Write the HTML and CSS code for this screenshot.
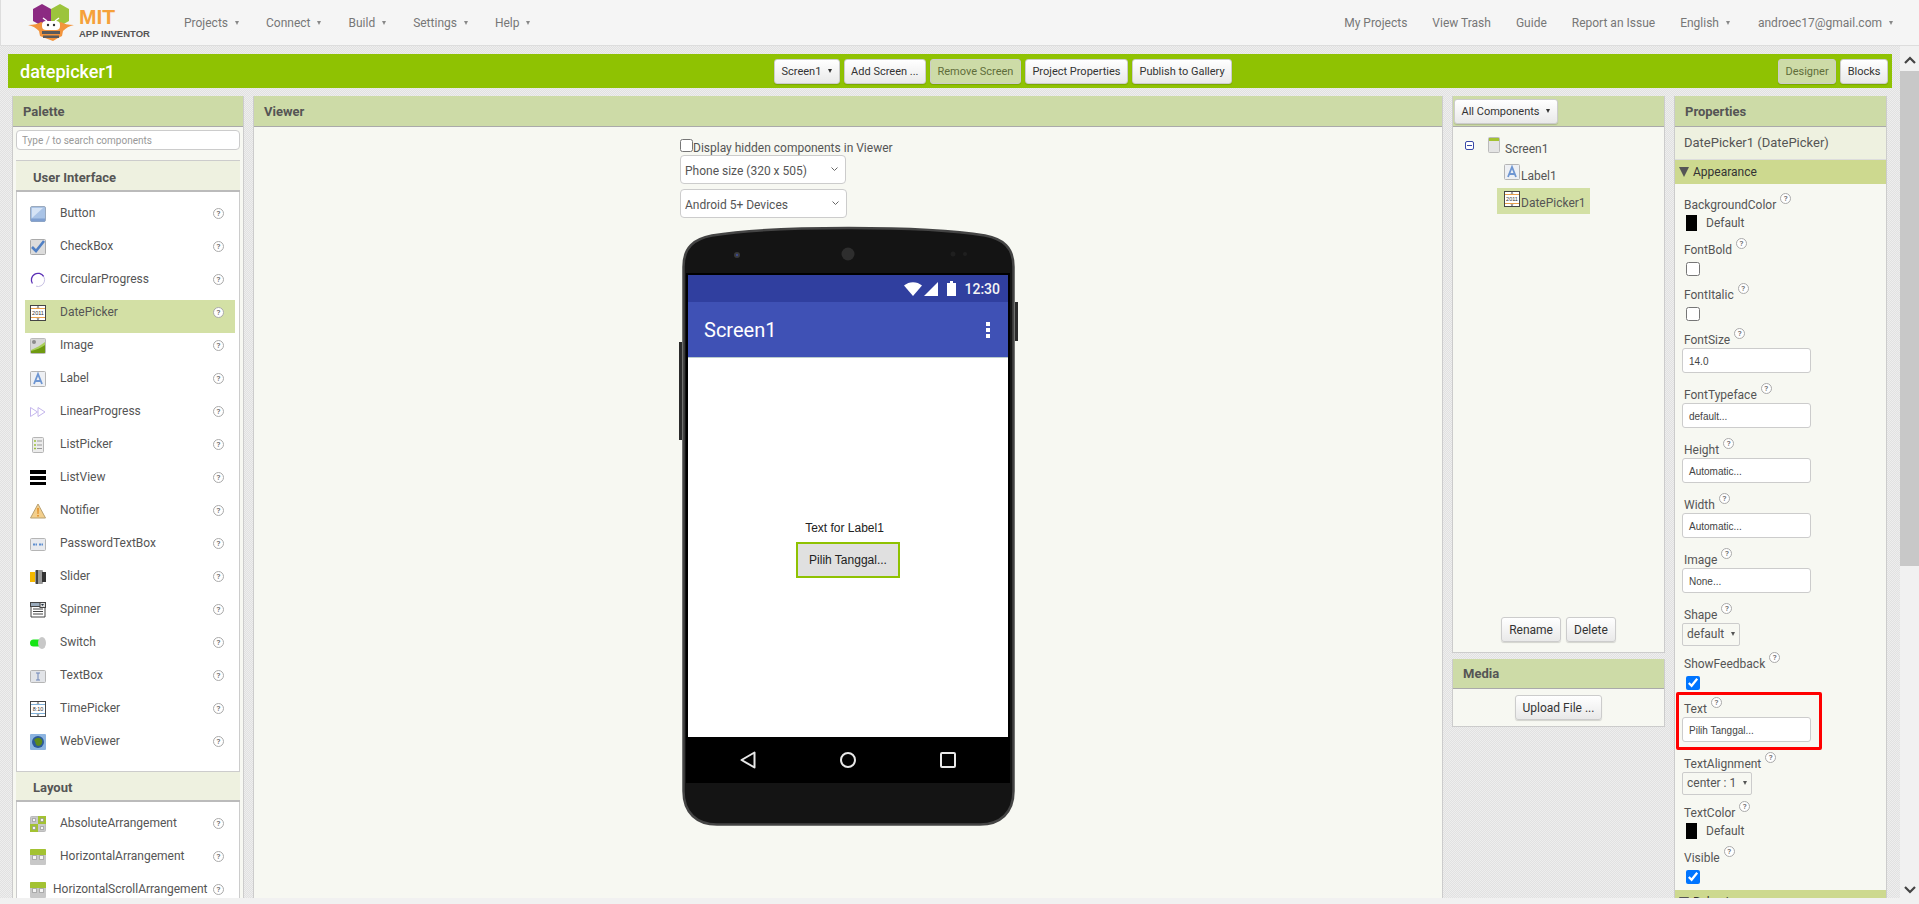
FILE: index.html
```html
<!DOCTYPE html>
<html lang="en">
<head>
    <meta charset="UTF-8">
    <title>MIT App Inventor</title>
    <link rel="stylesheet" href="styles.css">
</head>
<body>
    <svg class="defs" width="0" height="0">
        <symbol id="i-button" viewBox="0 0 16 16">
            <rect x="0.5" y="0.5" width="15" height="15" rx="1.5" fill="#a9c3e6" stroke="#9aa9bd"/>
            <path d="M2 2h11L2 12z" fill="#d5e3f5"/>
            <rect x="1" y="12.5" width="14" height="3" fill="#7f9fd0"/>
        </symbol>
        <symbol id="i-checkbox" viewBox="0 0 16 16">
            <rect x="0.5" y="0.5" width="15" height="15" rx="1" fill="#dcdcdc" stroke="#aaa"/>
            <path d="M2 8l4 4 8-10" fill="none" stroke="#4f7fc4" stroke-width="2.6"/>
        </symbol>
        <symbol id="i-circular" viewBox="0 0 16 16">
            <path d="M10 1.6A6.5 6.5 0 1 1 6 14.2" fill="none" stroke="#c9c2e4" stroke-width="1"/>
            <path d="M13.6 4.4A6.5 6.5 0 0 0 2.4 11.5" fill="none" stroke="#5a2fb5" stroke-width="1.3"/>
        </symbol>
        <symbol id="i-image" viewBox="0 0 16 16">
            <rect x="0.5" y="0.5" width="15" height="15" rx="1" fill="#d8d8d8" stroke="#bbb"/>
            <circle cx="4" cy="4" r="2" fill="#8c8c8c"/>
            <path d="M1 12C6 10 11 7 15 4v11H1z" fill="#a9cf5a"/>
            <path d="M1 15v-2c5-1 10-3 14-6v8z" fill="#6f9a10"/>
        </symbol>
        <symbol id="i-label" viewBox="0 0 16 16">
            <rect x="0.5" y="0.5" width="15" height="15" rx="1" fill="#eef0f4" stroke="#b5b5b5"/>
            <path d="M4 13L8 3l4 10M5.5 10h5" fill="none" stroke="#6e96d2" stroke-width="1.8"/>
        </symbol>
        <symbol id="i-linear" viewBox="0 0 16 16">
            <path d="M0.5 3.5L7.5 8l-7 4.5zM8 3.5L15 8l-7 4.5z" fill="none" stroke="#c4b6ec"/>
        </symbol>
        <symbol id="i-listpicker" viewBox="0 0 16 16">
            <rect x="2.5" y="0.5" width="11" height="15" rx="1" fill="#ececec" stroke="#b5b5b5"/>
            <path d="M4 4h2M4 8h2M4 11.5h2" stroke="#9cbf3b" stroke-width="1.6"/>
            <path d="M7 4h5M7 8h5M7 11.5h5" stroke="#999"/>
        </symbol>
        <symbol id="i-listview" viewBox="0 0 16 16">
            <path d="M0 0h16v4H0zM0 6h16v4H0zM0 12h16v3H0z" fill="#000"/>
        </symbol>
        <symbol id="i-notifier" viewBox="0 0 16 16">
            <path d="M8 1l7.5 14H.5z" fill="#f3cf8c" stroke="#b8a070"/>
            <path d="M7.2 5h1.6l-.3 6h-1zM7.2 12h1.6v1.5H7.2z" fill="#e08a20"/>
        </symbol>
        <symbol id="i-password" viewBox="0 0 16 16">
            <rect x="0.5" y="2.5" width="15" height="12" rx="1" fill="#e8eaee" stroke="#b5b5b5"/>
            <path d="M3 8.5h4M9 8.5h4" stroke="#5f8fd0" stroke-width="2" stroke-dasharray="2 .5"/>
        </symbol>
        <symbol id="i-slider" viewBox="0 0 16 16">
            <rect x="0" y="3" width="6" height="10" fill="#f5b800"/>
            <rect x="5" y="1" width="8" height="14" rx="1" fill="#9a9a9a"/>
            <rect x="6" y="1" width="2" height="14" fill="#444"/>
            <rect x="12" y="3" width="4" height="10" fill="#333"/>
        </symbol>
        <symbol id="i-spinner" viewBox="0 0 16 16">
            <path d="M1 4h14v11H1z" fill="#fff" stroke="#444"/>
            <rect x="0.5" y="0.5" width="15" height="4" fill="#9ab" stroke="#444"/>
            <rect x="10" y="0.5" width="5.5" height="5" fill="#ddd" stroke="#444"/>
            <path d="M11 2h3l-1.5 2z" fill="#234"/>
            <path d="M3 7h10M3 9.5h10M3 12h10" stroke="#444"/>
        </symbol>
        <symbol id="i-switch" viewBox="0 0 16 16">
            <rect x="0" y="4.5" width="12" height="7" rx="3.5" fill="#16e516"/>
            <ellipse cx="12" cy="8" rx="4" ry="6" fill="#c8c8c8"/>
        </symbol>
        <symbol id="i-textbox" viewBox="0 0 16 16">
            <rect x="0.5" y="2.5" width="15" height="12" rx="1" fill="#e2e4e8" stroke="#b5b5b5"/>
            <path d="M6 5h4M6 12h4M8 5v7" fill="none" stroke="#6e86b8"/>
        </symbol>
        <symbol id="i-web" viewBox="0 0 16 16">
            <rect x="0" y="0" width="16" height="16" rx="1" fill="#8cb4e0"/>
            <circle cx="8" cy="8" r="6" fill="#2c5a9a"/>
            <path d="M4 6c3-3 6-3 8 0 1 3-1 6-4 6-3-1-2-4-4-6z" fill="#5c8a1c"/>
        </symbol>
        <symbol id="i-absolute" viewBox="0 0 16 16">
            <rect x="0.5" y="0.5" width="15" height="15" rx="1" fill="#c8c8c8" stroke="#bbb"/>
            <rect x="0" y="8" width="8" height="8" fill="#a3c232"/>
            <rect x="8" y="0" width="8" height="8" fill="#a3c232"/>
            <path d="M2.5 2.5h3v3h-3zM10.5 2.5h3v3h-3zM2.5 10.5h3v3h-3zM10.5 10.5h3v3h-3z" fill="#f4f4f4" stroke="#888" stroke-width=".6"/>
        </symbol>
        <symbol id="i-horizontal" viewBox="0 0 16 16">
            <rect x="0" y="0" width="16" height="16" rx="1" fill="#c8c8c8"/>
            <path d="M0 1a1 1 0 0 1 1-1h14a1 1 0 0 1 1 1v5H0z" fill="#a3c232"/>
            <path d="M2.5 6.5h4v4h-4zM9.5 6.5h4v4h-4z" fill="#f4f4f4" stroke="#888" stroke-width=".6"/>
        </symbol>
        <symbol id="i-screen" viewBox="0 0 12 16">
            <rect x="0.5" y="0.5" width="11" height="15" rx="1" fill="#e4e4e4" stroke="#bbb"/>
            <rect x="1" y="1" width="10" height="3" fill="#a3c232"/>
        </symbol>
    </svg>

    <header class="topbar">
        <div class="logo">
            <svg class="logo-mark" width="46" height="38" viewBox="0 0 46 38">
                <path d="M14 0l9 5v12l-9 5-9-5V5z" fill="#8c2a82"/>
                <path d="M32 0l9 5v12l-9 5-9-5V5z" fill="#9cc43c"/>
                <path d="M0 21c6 0 10-1 13-3l7 3h6l7-3c3 2 7 3 13 3-5 1-8 3-11 6l-1 5-4 2-5 3-8-3-5-2-1-5C8 24 5 22 0 21z" fill="#f2943c"/>
                <rect x="14" y="17" width="18" height="9" rx="4" fill="#fff"/>
                <circle cx="20" cy="21" r="1.2" fill="#333"/>
                <circle cx="26" cy="21" r="1.2" fill="#333"/>
                <path d="M14 27h18v3H14zM15 31.500h16v2.500H15z" fill="#5a5a5a"/>
                <path d="M19 17l-4-3M27 17l4-3" stroke="#fff" stroke-width="1.400"/>
            </svg>
            <div class="logo-text">
                <span class="logo-mit">MIT</span>
                <span class="logo-sub">APP INVENTOR</span>
            </div>
        </div>
        <nav class="menu">
            <a>Projects <i class="caret"></i></a>
            <a>Connect <i class="caret"></i></a>
            <a>Build <i class="caret"></i></a>
            <a>Settings <i class="caret"></i></a>
            <a>Help <i class="caret"></i></a>
        </nav>
        <nav class="menu menu-right">
            <a>My Projects</a>
            <a>View Trash</a>
            <a>Guide</a>
            <a>Report an Issue</a>
            <a class="lang">English <i class="caret"></i></a>
            <a>androec17@gmail.com <i class="caret"></i></a>
        </nav>
    </header>

    <div class="main">
        <div class="work">
            <div class="titlebar">
                <h1 class="project-name">datepicker1</h1>
                <div class="toolbar">
                    <button class="btn btn-small">Screen1 <i class="caret"></i></button>
                    <button class="btn btn-small">Add Screen ...</button>
                    <button class="btn btn-small btn-off">Remove Screen</button>
                    <button class="btn btn-small">Project Properties</button>
                    <button class="btn btn-small">Publish to Gallery</button>
                </div>
                <div class="toolbar-right">
                    <button class="btn btn-small btn-off">Designer</button>
                    <button class="btn btn-small">Blocks</button>
                </div>
            </div>

            <div class="panels">
                <section class="panel palette">
                    <div class="panel-head">Palette</div>
                    <input class="search" type="text" placeholder="Type / to search components">
                    <div class="group-head">User Interface</div>
                    <ul class="pal-list">
                        <li class="pal-row"><svg class="ico"><use href="#i-button"/></svg><span>Button</span><b class="help">?</b></li>
                        <li class="pal-row"><svg class="ico"><use href="#i-checkbox"/></svg><span>CheckBox</span><b class="help">?</b></li>
                        <li class="pal-row"><svg class="ico"><use href="#i-circular"/></svg><span>CircularProgress</span><b class="help">?</b></li>
                        <li class="pal-row selected">
                            <svg class="ico" viewBox="0 0 16 16">
                                <rect x="0.5" y="0.5" width="15" height="15" fill="#fff" stroke="#444"/>
                                <path d="M1 3.5h14M1 12.5h14" stroke="#e8a04c"/>
                                <path d="M6.5 2.5h3L8 1zM6.5 13.5h3L8 15z" fill="#444"/>
                                <text x="8" y="10.2" class="icon-text">2011</text>
                            </svg>
                            <span>DatePicker</span><b class="help">?</b>
                        </li>
                        <li class="pal-row"><svg class="ico"><use href="#i-image"/></svg><span>Image</span><b class="help">?</b></li>
                        <li class="pal-row"><svg class="ico"><use href="#i-label"/></svg><span>Label</span><b class="help">?</b></li>
                        <li class="pal-row"><svg class="ico"><use href="#i-linear"/></svg><span>LinearProgress</span><b class="help">?</b></li>
                        <li class="pal-row"><svg class="ico"><use href="#i-listpicker"/></svg><span>ListPicker</span><b class="help">?</b></li>
                        <li class="pal-row"><svg class="ico"><use href="#i-listview"/></svg><span>ListView</span><b class="help">?</b></li>
                        <li class="pal-row"><svg class="ico"><use href="#i-notifier"/></svg><span>Notifier</span><b class="help">?</b></li>
                        <li class="pal-row"><svg class="ico"><use href="#i-password"/></svg><span>PasswordTextBox</span><b class="help">?</b></li>
                        <li class="pal-row"><svg class="ico"><use href="#i-slider"/></svg><span>Slider</span><b class="help">?</b></li>
                        <li class="pal-row"><svg class="ico"><use href="#i-spinner"/></svg><span>Spinner</span><b class="help">?</b></li>
                        <li class="pal-row"><svg class="ico"><use href="#i-switch"/></svg><span>Switch</span><b class="help">?</b></li>
                        <li class="pal-row"><svg class="ico"><use href="#i-textbox"/></svg><span>TextBox</span><b class="help">?</b></li>
                        <li class="pal-row">
                            <svg class="ico" viewBox="0 0 16 16">
                                <rect x="0.5" y="0.5" width="15" height="15" fill="#fff" stroke="#444"/>
                                <path d="M1 3.5h14M1 12.5h14" stroke="#7fb0d8"/>
                                <path d="M6.5 2.5h3L8 1zM6.5 13.5h3L8 15z" fill="#444"/>
                                <text x="8" y="10.2" class="icon-text">8:10</text>
                            </svg>
                            <span>TimePicker</span><b class="help">?</b>
                        </li>
                        <li class="pal-row"><svg class="ico"><use href="#i-web"/></svg><span>WebViewer</span><b class="help">?</b></li>
                    </ul>
                    <div class="group-head group-plain">Layout</div>
                    <ul class="pal-list">
                        <li class="pal-row"><svg class="ico"><use href="#i-absolute"/></svg><span>AbsoluteArrangement</span><b class="help">?</b></li>
                        <li class="pal-row"><svg class="ico"><use href="#i-horizontal"/></svg><span>HorizontalArrangement</span><b class="help">?</b></li>
                        <li class="pal-row long"><svg class="ico"><use href="#i-horizontal"/></svg><span>HorizontalScrollArrangement</span><b class="help">?</b></li>
                    </ul>
                </section>

                <section class="panel viewer">
                    <div class="panel-head">Viewer</div>
                    <div class="viewer-body">
                        <label class="hidden-check"><input type="checkbox"><span>Display hidden components in Viewer</span></label>
                        <select class="viewer-select size-select"><option>Phone size (320 x 505)</option></select>
                        <select class="viewer-select"><option>Android 5+ Devices</option></select>

                        <div class="phone">
                            <svg class="phone-shell" width="333" height="601" viewBox="0 0 333 601">
                                <path d="M1.500 42C1.500 22 12 14 30 10.500 90 .5 243 .5 303 10.500 321 14 331.500 22 331.500 42V566C331.500 588 318 599.500 298 599.500H35C15 599.500 1.500 588 1.500 566Z" fill="#141414" stroke="#444" stroke-width="2.500"/>
                                <circle cx="55" cy="30" r="3" fill="#3a3a3a"/>
                                <circle cx="55" cy="30" r="1.200" fill="#3d4a8c"/>
                                <circle cx="166" cy="29" r="6.500" fill="#2e2e2e"/>
                                <circle cx="271" cy="29" r="2.500" fill="#1f1f1f"/>
                                <circle cx="283" cy="29" r="2" fill="#1f1f1f"/>
                            </svg>
                            <i class="side-btn side-right"></i>
                            <i class="side-btn side-left"></i>
                            <div class="screen">
                                <div class="status-bar">
                                    <svg width="18" height="14" viewBox="0 0 18 14"><path d="M0 3.500C5-1 13-1 18 3.500L9 14z" fill="#fff"/></svg>
                                    <svg width="14" height="14" viewBox="0 0 14 14"><path d="M0 14L14 0v14z" fill="#fff"/></svg>
                                    <svg class="battery" width="9" height="15" viewBox="0 0 9 15"><path d="M0 2h3V0h3v2h3v13H0z" fill="#fff"/></svg>
                                    <span class="clock">12:30</span>
                                </div>
                                <div class="app-bar">
                                    <span>Screen1</span>
                                    <svg width="4" height="16" viewBox="0 0 4 16"><path d="M0 0h4v4H0zM0 6h4v4H0zM0 12h4v4H0z" fill="#fff"/></svg>
                                </div>
                                <div class="form">
                                    <span class="form-label">Text for Label1</span>
                                    <div class="form-button">Pilih Tanggal...</div>
                                </div>
                            </div>
                            <div class="nav-bar">
                                <svg width="16" height="18" viewBox="0 0 16 18"><path d="M14.500 1.500V16.500L1.500 9z" fill="none" stroke="#e8e8e8" stroke-width="2" stroke-linejoin="round"/></svg>
                                <svg width="16" height="16" viewBox="0 0 16 16"><circle cx="8" cy="8" r="7" fill="none" stroke="#e8e8e8" stroke-width="2"/></svg>
                                <svg width="16" height="16" viewBox="0 0 16 16"><rect x="1" y="1" width="14" height="14" rx="1" fill="none" stroke="#e8e8e8" stroke-width="2"/></svg>
                            </div>
                        </div>
                    </div>
                </section>

                <div class="side-col">
                    <section class="panel tree-panel">
                        <div class="panel-head head-btn"><button class="btn btn-small">All Components <i class="caret"></i></button></div>
                        <div class="tree">
                            <div class="tree-row tree-root"><i class="minus"></i><svg class="ico-screen"><use href="#i-screen"/></svg><span>Screen1</span></div>
                            <div class="tree-row"><svg class="ico"><use href="#i-label"/></svg><span>Label1</span></div>
                            <div class="tree-row selected">
                                <svg class="ico" viewBox="0 0 16 16">
                                    <rect x="0.5" y="0.5" width="15" height="15" fill="#fff" stroke="#444"/>
                                    <path d="M1 3.5h14M1 12.5h14" stroke="#e8a04c"/>
                                    <path d="M6.5 2.5h3L8 1zM6.5 13.5h3L8 15z" fill="#444"/>
                                    <text x="8" y="10.2" class="icon-text">2011</text>
                                </svg>
                                <span>DatePicker1</span>
                            </div>
                        </div>
                        <div class="tree-actions">
                            <button class="btn">Rename</button>
                            <button class="btn">Delete</button>
                        </div>
                    </section>
                    <section class="panel media-panel">
                        <div class="panel-head">Media</div>
                        <div class="media-body"><button class="btn">Upload File ...</button></div>
                    </section>
                </div>

                <section class="panel props">
                    <div class="panel-head">Properties</div>
                    <div class="prop-title">DatePicker1 (DatePicker)</div>
                    <div class="prop-section"><i class="tri"></i>Appearance</div>
                    <div class="prop-list">
                        <div class="prop prop-color">
                            <div class="prop-label">BackgroundColor<b class="help">?</b></div>
                            <div class="color-val"><i class="swatch"></i>Default</div>
                        </div>
                        <div class="prop prop-check">
                            <div class="prop-label">FontBold<b class="help">?</b></div>
                            <input type="checkbox">
                        </div>
                        <div class="prop prop-check">
                            <div class="prop-label">FontItalic<b class="help">?</b></div>
                            <input type="checkbox">
                        </div>
                        <div class="prop prop-input">
                            <div class="prop-label">FontSize<b class="help">?</b></div>
                            <div class="text-val">14.0</div>
                        </div>
                        <div class="prop prop-input">
                            <div class="prop-label">FontTypeface<b class="help">?</b></div>
                            <div class="text-val">default...</div>
                        </div>
                        <div class="prop prop-input">
                            <div class="prop-label">Height<b class="help">?</b></div>
                            <div class="text-val">Automatic...</div>
                        </div>
                        <div class="prop prop-input">
                            <div class="prop-label">Width<b class="help">?</b></div>
                            <div class="text-val">Automatic...</div>
                        </div>
                        <div class="prop prop-input">
                            <div class="prop-label">Image<b class="help">?</b></div>
                            <div class="text-val">None...</div>
                        </div>
                        <div class="prop prop-choice">
                            <div class="prop-label">Shape<b class="help">?</b></div>
                            <div class="choice-val">default <i class="caret"></i></div>
                        </div>
                        <div class="prop prop-check">
                            <div class="prop-label">ShowFeedback<b class="help">?</b></div>
                            <input type="checkbox" checked>
                        </div>
                        <div class="prop prop-input prop-marked">
                            <div class="prop-label">Text<b class="help">?</b></div>
                            <div class="text-val">Pilih Tanggal...</div>
                            <div class="red-box"></div>
                        </div>
                        <div class="prop prop-choice">
                            <div class="prop-label">TextAlignment<b class="help">?</b></div>
                            <div class="choice-val choice-wide">center : 1 <i class="caret"></i></div>
                        </div>
                        <div class="prop prop-color">
                            <div class="prop-label">TextColor<b class="help">?</b></div>
                            <div class="color-val"><i class="swatch"></i>Default</div>
                        </div>
                        <div class="prop prop-check prop-last">
                            <div class="prop-label">Visible<b class="help">?</b></div>
                            <input type="checkbox" checked>
                        </div>
                    </div>
                    <div class="prop-section"><i class="tri"></i>Behavior</div>
                </section>
            </div>
        </div>
        <div class="vscroll">
            <svg width="12" height="8" viewBox="0 0 12 8"><path d="M1 7l5-5 5 5" fill="none" stroke="#444" stroke-width="2.200"/></svg>
            <div class="vscroll-thumb"></div>
            <svg class="vscroll-down" width="12" height="8" viewBox="0 0 12 8"><path d="M1 1l5 5 5-5" fill="none" stroke="#444" stroke-width="2.200"/></svg>
        </div>
    </div>
</body>
</html>
```

FILE: styles.css
```css
:root {
    --green: #8fc202;
    --head-green: #cddba7;
    --pale: #eef1e0;
    --panel-bg: #f7f8f2;
    --text: #555;
}
* {
    box-sizing: border-box;
}
html, body {
    height: 904px;
    overflow: hidden;
}
body {
    margin: 0;
    display: flex;
    flex-direction: column;
    font-family: Roboto, sans-serif;
    font-size: 12px;
    color: var(--text);
    background-color: #f1f1f1;
}
.defs {
    position: absolute;
}
.icon-text {
    font-family: "Liberation Sans", sans-serif;
    font-size: 5.5px;
    text-anchor: middle;
    fill: #333;
}
.caret {
    display: inline-block;
    width: 0;
    height: 0;
    margin-left: 4px;
    vertical-align: 2px;
    border-left: 2.5px solid transparent;
    border-right: 2.5px solid transparent;
    border-top: 4px solid currentColor;
}

/* top bar */
.topbar {
    height: 46px;
    flex: none;
    display: flex;
    align-items: center;
    background: #f5f5f5;
    border-bottom: 1px solid #ddd;
    border-left: 1px solid #ddd;
    color: #777;
}
.logo {
    display: flex;
    width: 183px;
    padding: 1px 0 0 27px;
}
.logo-text {
    display: flex;
    flex-direction: column;
    margin: 2px 0 0 5px;
    font-family: "Liberation Sans", sans-serif;
    font-weight: bold;
}
.logo-mit {
    font-size: 21px;
    line-height: 22px;
    color: #f5a13a;
}
.logo-sub {
    font-size: 9.5px;
    line-height: 12px;
    color: #555;
}
.menu {
    display: flex;
    gap: 27px;
}
.menu a .caret {
    color: #888;
}
.menu-right {
    margin-left: auto;
    padding-right: 26px;
    gap: 25px;
}
.lang {
    margin-right: 3px;
}

.main {
    flex: 1;
    display: flex;
    min-height: 0;
}
.work {
    width: 1900px;
    height: 852px;
    overflow: hidden;
    padding: 8px 8px 0;
    background: repeating-conic-gradient(#e1e1e1 0 25%, #eeeeee 0 50%) 0 0 / 2px 2px;
}
.vscroll {
    width: 19px;
    display: flex;
    flex-direction: column;
    align-items: center;
    padding-top: 10px;
}
.vscroll-thumb {
    align-self: stretch;
    height: 495px;
    margin-top: 7px;
    background: #c8c8c8;
}
.vscroll-down {
    margin-top: 320px;
}

/* green title bar */
.titlebar {
    height: 34px;
    display: flex;
    align-items: center;
    background: var(--green);
    padding-right: 4px;
}
.project-name {
    width: 766px;
    margin: 0;
    padding-left: 12px;
    font-size: 18px;
    font-weight: 500;
    color: #fff;
}
.toolbar, .toolbar-right {
    display: flex;
    gap: 4px;
}
.toolbar-right {
    margin-left: auto;
}
.btn {
    height: 25px;
    padding: 0 7px;
    font-family: Roboto, sans-serif;
    font-size: 12px;
    color: #333;
    background: linear-gradient(#fff, #e9e9e9);
    border: 1px solid #ccc;
    border-radius: 3px;
    box-shadow: 0 1px 1px rgba(0,0,0,0.15);
    white-space: nowrap;
}
.btn-small {
    padding: 0 6.5px;
    font-size: 11px;
}
.btn-off {
    background: var(--head-green);
    color: #5f6d3a;
}

/* panels */
.panels {
    display: grid;
    grid-template-columns: 232px 1190px 213px 213px;
    gap: 9px;
    margin: 8px 0 0 4px;
}
.panel {
    background: var(--panel-bg);
    border-left: 1px solid #ccc;
    border-right: 1px solid #ccc;
}
.panel-head {
    height: 31px;
    padding: 0 10px;
    font-size: 13px;
    font-weight: 700;
    line-height: 31px;
    background: var(--head-green);
    border-bottom: 1px solid #aaa;
}

/* palette */
.search {
    display: block;
    width: 224px;
    height: 20px;
    margin: 3px 3px 10px;
    padding: 0 5px;
    font-family: Roboto, sans-serif;
    font-size: 10px;
    background: #fff;
    border: 1px solid #ccc;
    border-radius: 4px;
}
.search::placeholder {
    color: #999;
}
.group-head {
    height: 32px;
    margin: 0 3px;
    padding-left: 17px;
    font-size: 13px;
    font-weight: 700;
    line-height: 34px;
    background: var(--pale);
    border-top: 1px solid #ccc;
    border-bottom: 2px solid #bbb;
}
.group-plain {
    height: 31px;
    line-height: 32px;
}
.pal-list {
    list-style: none;
    margin: 0 3px;
    padding: 9px 4px 9px 8px;
    background: #fff;
    border-left: 1px solid #ccc;
    border-right: 1px solid #ccc;
}
.pal-row {
    display: flex;
    align-items: flex-start;
    gap: 14px;
    height: 33px;
    padding: 5px 0 0 5px;
}
.pal-row.selected {
    background: #d3e0a5;
}
.pal-row span {
    line-height: 15px;
}
.pal-row .help {
    margin: 2px 11px 0 auto;
}
.pal-row.long {
    gap: 7px;
}
.pal-row.long span {
    margin-right: -4px;
    white-space: nowrap;
}
.ico {
    width: 16px;
    height: 16px;
    flex: none;
}
.help {
    display: inline-block;
    width: 11px;
    height: 11px;
    flex: none;
    font-size: 8px;
    font-weight: 500;
    line-height: 9px;
    text-align: center;
    color: #666;
    background: #fff;
    border: 1px solid #aaa;
    border-radius: 50%;
}

/* viewer */
.viewer-body {
    display: flex;
    flex-direction: column;
    align-items: flex-start;
    width: 336px;
    margin: 0 auto;
    padding-top: 12px;
}
.hidden-check {
    display: flex;
    align-items: flex-start;
    height: 14px;
}
.hidden-check input {
    width: 13px;
    height: 13px;
    margin: 0;
}
.hidden-check span {
    line-height: 18px;
}
.viewer-select {
    width: 166px;
    height: 29px;
    margin-top: 2px;
    padding: 2px 0 0 4px;
    font-family: Roboto, sans-serif;
    font-size: 12px;
    color: var(--text);
    appearance: none;
    background: #fff url("data:image/svg+xml,%3Csvg xmlns='http://www.w3.org/2000/svg' width='7' height='5'%3E%3Cpath d='M.5.5l3 3 3-3' fill='none' stroke='%23666'/%3E%3C/svg%3E") no-repeat right 7px center;
    border: 1px solid #ccc;
    border-radius: 4px;
}
.size-select + .viewer-select {
    width: 167px;
    margin-top: 5px;
}
.phone {
    position: relative;
    width: 333px;
    height: 601px;
    margin: 7px 0 0 2px;
    padding-top: 48px;
}
.phone-shell {
    position: absolute;
    top: 0;
    left: 0;
}
.side-btn {
    position: absolute;
    width: 3px;
    background: #2b2b2b;
}
.side-right {
    top: 77px;
    right: -3px;
    height: 39px;
}
.side-left {
    top: 117px;
    left: -3px;
    height: 98px;
}
.screen {
    position: relative;
    margin: 0 5px 0 4px;
    padding: 2px 2px 0;
    background: #000;
}
.status-bar {
    height: 27px;
    display: flex;
    align-items: center;
    justify-content: flex-end;
    padding-right: 8px;
    background: #303f9f;
}
.status-bar svg {
    margin-right: 2px;
}
.status-bar .battery {
    margin: 0 8px 0 7px;
}
.clock {
    font-size: 14px;
    font-weight: 500;
    color: #f4f4f4;
}
.app-bar {
    height: 56px;
    display: flex;
    align-items: center;
    justify-content: space-between;
    padding: 0 18px 0 16px;
    font-size: 20px;
    color: #fff;
    background: #3f51b5;
    border-bottom: 1px solid #bcc;
}
.form {
    height: 379px;
    display: flex;
    flex-direction: column;
    align-items: center;
    padding-top: 163px;
    font-family: "Liberation Sans", sans-serif;
    font-size: 12px;
    color: #222;
    background: #fff;
}
.form-label {
    margin-right: 7px;
    line-height: 14px;
}
.form-button {
    width: 104px;
    height: 36px;
    margin-top: 7px;
    line-height: 32px;
    text-align: center;
    background: #e0e0e0;
    border: 2px solid var(--green);
}
.nav-bar {
    position: relative;
    height: 46px;
    display: flex;
    align-items: center;
    justify-content: space-between;
    margin: 0 5px 0 4px;
    padding: 0 54px;
    background: #000;
}

/* components */
.side-col {
    display: flex;
    flex-direction: column;
    gap: 6px;
}
.tree-panel {
    height: 557px;
    display: flex;
    flex-direction: column;
}
.head-btn {
    display: flex;
    align-items: flex-start;
    padding: 2px 1px 0;
}
.head-btn .btn {
    margin-top: 1px;
}
.tree {
    flex: 1;
    padding-top: 7px;
}
.tree-row {
    display: flex;
    align-items: flex-start;
    gap: 1px;
    width: 93px;
    height: 27px;
    margin-left: 44px;
    padding: 3px 0 0 7px;
}
.tree-row span {
    padding-top: 5px;
}
.tree-row.selected {
    background: #d3e0a5;
    height: 26px;
}
.tree-root {
    gap: 3px;
    margin-left: 12px;
    width: auto;
    padding-left: 0;
}
.minus {
    width: 9px;
    height: 9px;
    margin: 4px 11px 0 0;
    background: linear-gradient(#3a4aa8, #3a4aa8) center / 5px 1px no-repeat, #fff;
    border: 1px solid #3a4aa8;
    border-radius: 2px;
}
.ico-screen {
    width: 12px;
    height: 16px;
    margin-right: 2px;
}
.tree-actions {
    display: flex;
    justify-content: center;
    gap: 5px;
    padding-bottom: 10px;
    border-bottom: 1px solid #ccc;
}
.media-panel .panel-head {
    height: 30px;
    line-height: 29px;
}
.media-body {
    display: flex;
    justify-content: center;
    height: 38px;
    padding-top: 6px;
    border-bottom: 1px solid #ccc;
}

/* properties */
.prop-title {
    height: 33px;
    padding-left: 9px;
    font-size: 13px;
    line-height: 32px;
    background: var(--pale);
    border-bottom: 1px solid #ddd;
}
.prop-section {
    display: flex;
    align-items: center;
    height: 24px;
    padding-left: 4px;
    color: #333;
    background: #cdd98f;
}
.tri {
    width: 0;
    height: 0;
    margin-right: 4px;
    border-left: 5px solid transparent;
    border-right: 5px solid transparent;
    border-top: 10px solid #555;
}
.prop-list {
    padding: 11px 0 0 9px;
}
.prop-label {
    display: flex;
    align-items: flex-start;
    height: 18px;
    line-height: 20px;
}
.prop-label .help {
    margin: -2px 0 0 4px;
}
.prop {
    position: relative;
}
.prop input[type="checkbox"] {
    display: block;
    width: 14px;
    height: 14px;
    margin: 4px 0 0 2px;
}
.prop-check {
    height: 45px;
}
.prop-last {
    height: 42px;
}
.prop-color {
    height: 45px;
}
.color-val {
    display: flex;
    align-items: center;
    gap: 9px;
    margin: 2px 0 0 2px;
}
.swatch {
    width: 11px;
    height: 16px;
    background: #000;
}
.prop-input {
    height: 55px;
}
.text-val {
    width: 129px;
    height: 25px;
    margin-left: -2px;
    padding-left: 6px;
    font-family: "Liberation Sans", sans-serif;
    font-size: 10px;
    line-height: 25px;
    color: #444;
    background: #fff;
    border: 1px solid #ccc;
    border-radius: 3px;
}
.prop-choice {
    height: 49px;
}
.choice-val {
    width: 58px;
    height: 23px;
    margin-left: -2px;
    padding-left: 4px;
    line-height: 21px;
    background: var(--panel-bg);
    border: 1px solid #ccc;
    border-radius: 2px;
}
.choice-wide {
    width: 70px;
}
.red-box {
    position: absolute;
    top: -7px;
    left: -8px;
    width: 146px;
    height: 58px;
    border: 3px solid #f00;
    border-radius: 2px;
}
```
